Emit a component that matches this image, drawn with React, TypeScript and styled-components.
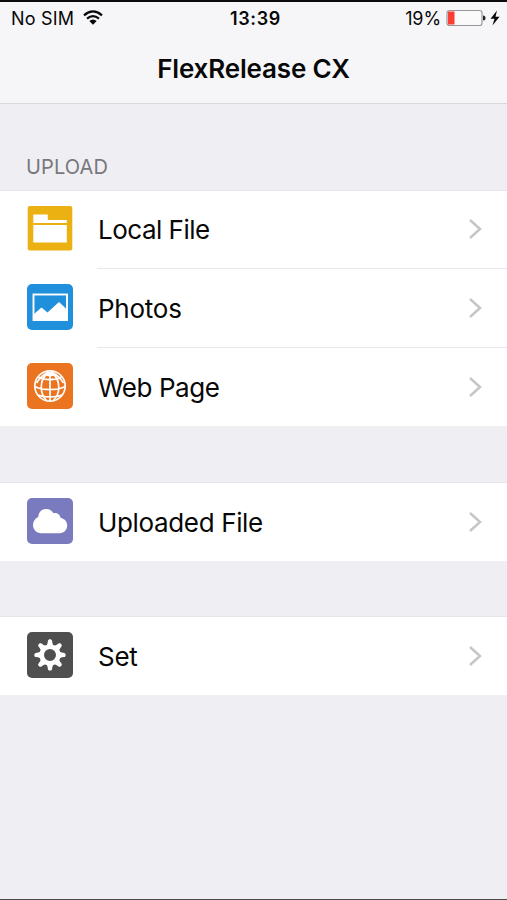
import React from "react";
import styled, { createGlobalStyle } from "styled-components";

const GlobalStyle = createGlobalStyle`
  * { box-sizing: border-box; }
  body { margin: 0; background: #efeef3; }
`;

const Screen = styled.main`
  display: flex;
  flex-direction: column;
  height: 900px;
  overflow: hidden;
  background: #efeef3;
  border-top: 2px solid #0b0b0c;
  border-bottom: 1px solid #48484a;
  color: #080808;
  font-family: Inter, "Liberation Sans", sans-serif;
`;

const Header = styled.header`
  height: 102px;
  background: #f6f6f8;
  border-bottom: 1px solid #d9d9dd;
`;

const StatusBar = styled.div`
  display: grid;
  grid-template-columns: 1fr auto 1fr;
  align-items: center;
  height: 33px;
  padding: 1px 7px 0 11px;
  font-size: 18px;
  line-height: 32px;
`;

const StatusGroup = styled.div<{ $end?: boolean }>`
  display: flex;
  align-items: center;
  justify-content: ${(p) => (p.$end ? "flex-end" : "flex-start")};
`;

const StatusText = styled.span<{ $spacing: number }>`
  letter-spacing: ${(p) => p.$spacing}px;
  white-space: nowrap;
`;

const Clock = styled.time`
  font-weight: 600;
  letter-spacing: 0.6px;
`;

const WifiIcon = styled.svg`
  width: 20px;
  height: 15px;
  margin: 0 0 3px 9px;
`;

const BatteryIcon = styled.svg`
  width: 54px;
  height: 18px;
  margin: 0 0 2px 5px;
`;

const Title = styled.h1`
  margin: 17px 0 0;
  text-align: center;
  font-size: 26px;
  line-height: 34px;
  font-weight: 600;
  letter-spacing: -0.15px;
`;

const SectionTitle = styled.h2`
  margin: 0;
  height: 86px;
  padding: 50px 26px 0;
  color: #77777c;
  font-size: 20px;
  line-height: 27px;
  font-weight: 400;
  letter-spacing: 0.15px;
`;

const Group = styled.section<{ $gap?: number }>`
  margin-top: ${(p) => p.$gap ?? 0}px;
  background: #fff;
  border-top: 1px solid #e6e6e9;
  border-bottom: 1px solid #f0f0f2;
`;

const Row = styled.a<{ $height: number }>`
  display: flex;
  height: ${(p) => p.$height}px;
  padding-left: 27px;
`;

const Badge = styled.svg`
  flex: none;
  width: 46px;
  height: 46px;
  margin: 15px 24px 0 0;
`;

const RowBody = styled.div<{ $divider?: boolean }>`
  display: flex;
  flex: 1;
  align-items: center;
  justify-content: space-between;
  padding-right: 25px;
  border-bottom: ${(p) => (p.$divider ? "1px solid #e8e8ea" : "0")};
`;

const Label = styled.span<{ $spacing: number }>`
  padding: 1px 0 0 1px;
  font-size: 26px;
  line-height: 32px;
  letter-spacing: ${(p) => p.$spacing}px;
`;

const Chevron = styled.svg`
  width: 14px;
  height: 22px;
  margin-bottom: 1px;
`;

const FolderArt = () => (
  <>
    <rect x=".7" width="44.600" height="44.500" rx="2" fill="#ebb113" />
    <path d="M6.300 8.500h14.500v5.500h19v3H6.300zM6.300 19h33.500v17.500H6.300z" fill="#fff" />
  </>
);

const PhotoArt = () => (
  <>
    <rect width="46" height="46" rx="5" fill="#2190dc" />
    <rect x="6.500" y="10.500" width="33.500" height="25.500" fill="none" stroke="#fff" strokeWidth="1.900" />
    <path d="M7 30l7.500-6.500 6 5L32 18l8 7.500V36H7z" fill="#fff" />
  </>
);

const GlobeArt = () => (
  <>
    <rect width="46" height="46" rx="5" fill="#eb7420" />
    <g fill="none" stroke="#fff" strokeWidth="1.700">
      <circle cx="23" cy="23" r="15.200" />
      <path d="M23 9v29M21 10C11.500 17 13 31 19.500 37.500M25 10c9.500 7 8 21 1.500 27.500M20 10c-4 2-8 6-10.500 10M26 10c4 2 8 6 10.500 10M8 23.500c6 4 24 4 30 0M11.500 14c5 3.500 18 3.500 23 0M11 32c5 2.500 19 2.500 24 0" />
    </g>
    <ellipse cx="23" cy="11" rx="4.500" ry="2.300" fill="#fff" />
  </>
);

const CloudArt = () => (
  <>
    <rect width="46" height="46" rx="5" fill="#797bbe" />
    <path d="M14 35.300c-4.500 0-8-3.600-8-8.200 0-3.700 2-6.900 5.300-8.200C11.500 14.300 14.500 11 19 11c3.300 0 6 1.500 7.500 4.200 3.600-.7 6.800 1.500 7.200 4.900 3.800.6 6.500 3.600 6.500 7.500 0 4.400-3.300 7.700-7.500 7.700z" fill="#fff" />
  </>
);

const teeth = [0, 45, 90, 135, 180, 225, 270, 315];

const GearArt = () => (
  <>
    <rect width="46" height="46" rx="5" fill="#4f4f50" />
    <g fill="#fff">
      {teeth.map((angle) => (
        <path key={angle} d="M17.500 15.500c2.500-1.700 3.100-3.500 3.400-6.600.2-2.100 4-2.100 4.200 0 .3 3.100.9 4.900 3.400 6.600z" transform={`rotate(${angle} 23 23)`} />
      ))}
    </g>
    <circle cx="23" cy="23" r="8.300" fill="none" stroke="#fff" strokeWidth="4.600" />
  </>
);

interface ItemProps {
  label: string;
  spacing: number;
  height: number;
  divider?: boolean;
  art: React.ReactNode;
}

const Item = ({ label, spacing, height, divider, art }: ItemProps) => (
  <Row $height={height}>
    <Badge viewBox="0 0 46 46">{art}</Badge>
    <RowBody $divider={divider}>
      <Label $spacing={spacing}>{label}</Label>
      <Chevron viewBox="0 0 14 22">
        <path d="M2 2L12 11L2 20" fill="none" stroke="#c6c6c9" strokeWidth="2.500" />
      </Chevron>
    </RowBody>
  </Row>
);

export default function App() {
  return (
    <>
      <GlobalStyle />
      <Screen>
        <Header>
          <StatusBar>
            <StatusGroup>
              <StatusText $spacing={0.2}>No SIM</StatusText>
              <WifiIcon viewBox="0 0 20 15">
                <path d="M1 5.300Q10-2.500 19 5.300M4 8.700Q10 3.500 16 8.700" fill="none" stroke="#080808" strokeWidth="2.200" />
                <path d="M6.300 11Q10 8 13.700 11L10 14.800z" fill="#080808" />
              </WifiIcon>
            </StatusGroup>
            <Clock>13:39</Clock>
            <StatusGroup $end>
              <StatusText $spacing={-0.1}>19%</StatusText>
              <BatteryIcon viewBox="0 0 54 18">
                <rect x="1" y="1.500" width="35" height="15" rx="2.500" fill="#fafafa" stroke="#98989b" strokeWidth="1.200" />
                <path d="M2 2.500h6.500v13H2z" fill="#fb3d36" />
                <path d="M37 6.500q2.500 0 2.500 2.500T37 11.500z" fill="#222" />
                <path d="M51 1.500L44.500 9.800h4L46.500 16.500 53.500 7.700h-4z" fill="#080808" />
              </BatteryIcon>
            </StatusGroup>
          </StatusBar>
          <Title>FlexRelease CX</Title>
        </Header>
        <SectionTitle>UPLOAD</SectionTitle>
        <Group>
          <Item label="Local File" spacing={-0.5} height={78} divider art={<FolderArt />} />
          <Item label="Photos" spacing={-0.25} height={79} divider art={<PhotoArt />} />
          <Item label="Web Page" spacing={-0.45} height={78} art={<GlobeArt />} />
        </Group>
        <Group $gap={55}>
          <Item label="Uploaded File" spacing={-0.35} height={78} art={<CloudArt />} />
        </Group>
        <Group $gap={54}>
          <Item label="Set" spacing={-0.3} height={78} art={<GearArt />} />
        </Group>
      </Screen>
    </>
  );
}
